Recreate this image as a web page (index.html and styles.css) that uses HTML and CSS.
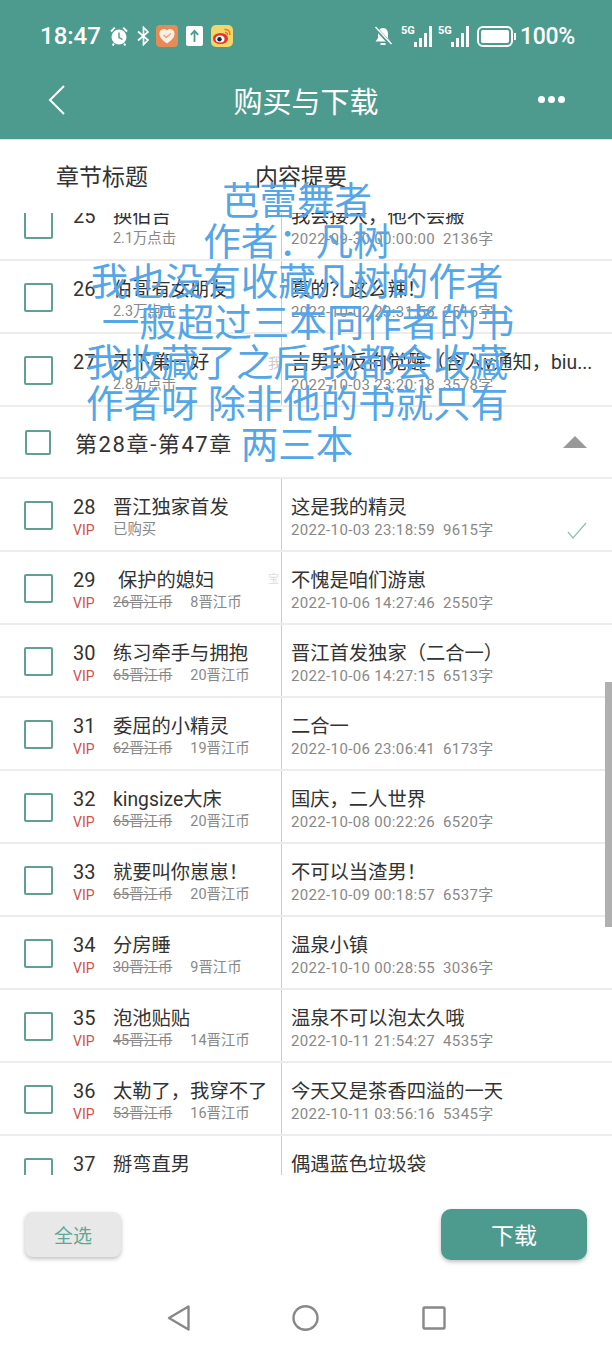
FILE: index.html
```html
<!DOCTYPE html>
<html lang="zh-CN">
<head>
  <meta charset="UTF-8" />
  <meta name="viewport" content="width=device-width, initial-scale=1.0"/>
  <title>购买与下载</title>
  <link rel="stylesheet" href="styles.css">
</head>
<body>
  <div class="phone">
    <header class="header">
      <div class="status">
        <div class="status-left">
          <span class="time">18:47</span>
          <svg class="ic-alarm" viewBox="0 0 18 20">
            <circle cx="9" cy="11" r="7.5" fill="#fff"/>
            <path d="M9 6.5V11.5L12.5 13.5" fill="none" stroke="#4d9a8e" stroke-width="1.4"/>
            <path d="M1 5.5L4.8 1.6M17 5.5L13.2 1.6M4 17.5L2.6 19.5M14 17.5L15.4 19.5" stroke="#fff" stroke-width="2" fill="none"/>
          </svg>
          <svg class="ic-bt" viewBox="0 0 13 20">
            <path d="M1 5.5L11 14L6.5 18.5V1.5L11 6L1 14.5" fill="none" stroke="#fff" stroke-width="1.7"/>
          </svg>
          <svg class="ic-app" viewBox="0 0 22 22">
            <rect width="22" height="22" rx="4" fill="#e58b55"/>
            <path d="M11 18.5C5 14.500 3.500 11.500 3.500 8.500C3.500 5.500 6 4 8 4C9.300 4 10.300 4.600 11 5.600C11.700 4.600 12.700 4 14 4C16 4 18.500 5.500 18.500 8.500C18.500 11.500 17 14.500 11 18.500Z" fill="#fbeee3"/>
            <path d="M7.500 10L10.200 12.500L14.800 8.500" fill="none" stroke="#e9a67c" stroke-width="1.500"/>
          </svg>
          <svg class="ic-up" viewBox="0 0 17 20">
            <rect width="17" height="20" rx="2" fill="#fff"/>
            <path d="M8.500 16V5M4.800 8.800L8.500 4.800L12.200 8.800" fill="none" stroke="#4d9a8e" stroke-width="1.800"/>
          </svg>
          <svg class="ic-app" viewBox="0 0 22 22">
            <rect width="22" height="22" rx="5" fill="#f4d568"/>
            <ellipse cx="9.500" cy="13.500" rx="7.500" ry="5.500" fill="#e2352d"/>
            <ellipse cx="9" cy="14" rx="4.500" ry="3.500" fill="#fff"/>
            <circle cx="8.500" cy="14.200" r="2.200" fill="#222"/>
            <path d="M13.500 4.500C17 4 19.500 6.500 18.800 10M14 7.500C15.500 7.300 16.700 8.300 16.400 9.800" fill="none" stroke="#e2752d" stroke-width="1.500"/>
          </svg>
        </div>
        <div class="status-right">
          <svg class="ic-bell" viewBox="0 0 20 20">
            <path d="M10 2C6.500 2 5 5 5 8V12L2.500 15.500H17.500L15 12V8C15 5 13.500 2 10 2Z" fill="#fff"/>
            <rect x="7.500" y="17" width="5" height="2" fill="#fff"/>
            <path d="M2 1.500L18 18.500" stroke="#4d9a8e" stroke-width="3.500"/>
            <path d="M2.500 1L18.500 18" stroke="#fff" stroke-width="1.500"/>
          </svg>
          <span class="signal">
            <span class="net">5G</span>
            <span class="bars"><i class="b1"></i><i class="b2"></i><i class="b3"></i><i class="b4"></i></span>
          </span>
          <span class="signal">
            <span class="net">5G</span>
            <span class="bars"><i class="b1"></i><i class="b2"></i><i class="b3"></i><i class="b4"></i></span>
          </span>
          <span class="battery"><span class="battery-fill"></span></span>
          <span class="battery-nub"></span>
          <span class="percent">100%</span>
        </div>
      </div>
      <div class="toolbar">
        <svg class="back" viewBox="0 0 18 32">
          <path d="M16 2L2 16L16 30" fill="none" stroke="#fff" stroke-width="2"/>
        </svg>
        <h1>购买与下载</h1>
        <div class="more"><i></i><i></i><i></i></div>
      </div>
    </header>

    <div class="col-head">
      <span class="col-a">章节标题</span>
      <span class="col-b">内容提要</span>
    </div>

    <div class="list">
      <div class="list-inner">
        <div class="row">
          <div class="left">
            <span class="check"></span>
            <div class="num"><div class="n">25</div></div>
            <div class="info"><div class="title">换伯吉</div><div class="sub">2.1万点击</div></div>
          </div>
          <div class="right"><div class="title">我会接大，他不会搬</div><div class="sub">2022-09-30 00:00:00&nbsp; 2136字</div></div>
        </div>
        <div class="row">
          <div class="left">
            <span class="check"></span>
            <div class="num"><div class="n">26</div></div>
            <div class="info"><div class="title">伯哥有女朋友</div><div class="sub">2.3万点击</div></div>
          </div>
          <div class="right"><div class="title">真的？这么辣！</div><div class="sub">2022-10-02 23:31:56&nbsp; 2516字</div></div>
        </div>
        <div class="row">
          <div class="left">
            <span class="check"></span>
            <div class="num"><div class="n">27</div></div>
            <div class="info"><div class="title">天下第一好</div><div class="sub">2.8万点击</div></div>
            <span class="ghost">我</span>
          </div>
          <div class="right"><div class="title">吉男的反向觉醒（含入v通知，biu...</div><div class="sub">2022-10-03 23:20:18&nbsp; 3578字</div></div>
        </div>
        <div class="group">
          <span class="check small"></span>
          <span class="group-name">第28章-第47章</span>
          <span class="arrow"></span>
        </div>
        <div class="row">
          <div class="left">
            <span class="check"></span>
            <div class="num"><div class="n">28</div><div class="vip">VIP</div></div>
            <div class="info"><div class="title">晋江独家首发</div><div class="sub">已购买</div></div>
          </div>
          <div class="right"><div class="title">这是我的精灵</div><div class="sub">2022-10-03 23:18:59&nbsp; 9615字</div>
            <svg class="done" viewBox="0 0 20 17"><path d="M1 10L6 16L19 1" fill="none" stroke="#8fbfb6" stroke-width="1.200"/></svg>
          </div>
        </div>
        <div class="row">
          <div class="left">
            <span class="check"></span>
            <div class="num"><div class="n">29</div><div class="vip">VIP</div></div>
            <div class="info"><div class="title indent">保护的媳妇</div><div class="sub"><s>26晋江币</s><span class="price">8晋江币</span></div></div>
            <span class="ghost pale">宝</span>
          </div>
          <div class="right"><div class="title">不愧是咱们游崽</div><div class="sub">2022-10-06 14:27:46&nbsp; 2550字</div></div>
        </div>
        <div class="row">
          <div class="left">
            <span class="check"></span>
            <div class="num"><div class="n">30</div><div class="vip">VIP</div></div>
            <div class="info"><div class="title">练习牵手与拥抱</div><div class="sub"><s>65晋江币</s><span class="price">20晋江币</span></div></div>
          </div>
          <div class="right"><div class="title">晋江首发独家（二合一）</div><div class="sub">2022-10-06 14:27:15&nbsp; 6513字</div></div>
        </div>
        <div class="row">
          <div class="left">
            <span class="check"></span>
            <div class="num"><div class="n">31</div><div class="vip">VIP</div></div>
            <div class="info"><div class="title">委屈的小精灵</div><div class="sub"><s>62晋江币</s><span class="price">19晋江币</span></div></div>
          </div>
          <div class="right"><div class="title">二合一</div><div class="sub">2022-10-06 23:06:41&nbsp; 6173字</div></div>
        </div>
        <div class="row">
          <div class="left">
            <span class="check"></span>
            <div class="num"><div class="n">32</div><div class="vip">VIP</div></div>
            <div class="info"><div class="title">kingsize大床</div><div class="sub"><s>65晋江币</s><span class="price">20晋江币</span></div></div>
          </div>
          <div class="right"><div class="title">国庆，二人世界</div><div class="sub">2022-10-08 00:22:26&nbsp; 6520字</div></div>
        </div>
        <div class="row">
          <div class="left">
            <span class="check"></span>
            <div class="num"><div class="n">33</div><div class="vip">VIP</div></div>
            <div class="info"><div class="title">就要叫你崽崽！</div><div class="sub"><s>65晋江币</s><span class="price">20晋江币</span></div></div>
          </div>
          <div class="right"><div class="title">不可以当渣男！</div><div class="sub">2022-10-09 00:18:57&nbsp; 6537字</div></div>
        </div>
        <div class="row">
          <div class="left">
            <span class="check"></span>
            <div class="num"><div class="n">34</div><div class="vip">VIP</div></div>
            <div class="info"><div class="title">分房睡</div><div class="sub"><s>30晋江币</s><span class="price">9晋江币</span></div></div>
          </div>
          <div class="right"><div class="title">温泉小镇</div><div class="sub">2022-10-10 00:28:55&nbsp; 3036字</div></div>
        </div>
        <div class="row">
          <div class="left">
            <span class="check"></span>
            <div class="num"><div class="n">35</div><div class="vip">VIP</div></div>
            <div class="info"><div class="title">泡池贴贴</div><div class="sub"><s>45晋江币</s><span class="price">14晋江币</span></div></div>
          </div>
          <div class="right"><div class="title">温泉不可以泡太久哦</div><div class="sub">2022-10-11 21:54:27&nbsp; 4535字</div></div>
        </div>
        <div class="row">
          <div class="left">
            <span class="check"></span>
            <div class="num"><div class="n">36</div><div class="vip">VIP</div></div>
            <div class="info"><div class="title">太勒了，我穿不了</div><div class="sub"><s>53晋江币</s><span class="price">16晋江币</span></div></div>
          </div>
          <div class="right"><div class="title">今天又是茶香四溢的一天</div><div class="sub">2022-10-11 03:56:16&nbsp; 5345字</div></div>
        </div>
        <div class="row">
          <div class="left">
            <span class="check"></span>
            <div class="num"><div class="n">37</div></div>
            <div class="info"><div class="title">掰弯直男</div></div>
          </div>
          <div class="right"><div class="title">偶遇蓝色垃圾袋</div></div>
        </div>
      </div>
    </div>

    <div class="actions">
      <button class="btn-all">全选</button>
      <button class="btn-down">下载</button>
    </div>

    <nav class="nav">
      <svg class="nav-back" viewBox="0 0 24 26"><path d="M21.500 1.500V24.500L2 13Z" fill="none" stroke="#888" stroke-width="2.400" stroke-linejoin="round"/></svg>
      <svg class="nav-home" viewBox="0 0 27 26"><ellipse cx="13.500" cy="13" rx="12" ry="11.700" fill="none" stroke="#888" stroke-width="2.400"/></svg>
      <svg class="nav-recent" viewBox="0 0 24 24"><rect x="1.500" y="1.500" width="21" height="21" rx="1" fill="none" stroke="#888" stroke-width="2.400"/></svg>
    </nav>

    <div class="scrollbar"></div>

    <div class="comment">
      芭蕾舞者<br>
      作者：凡树<br>
      我也没有收藏凡树的作者<br>
      <span class="nudge">一般超过三本同作者的书</span><br>
      我收藏了之后 我都会收藏<br>
      作者呀 除非他的书就只有<br>
      两三本
    </div>
  </div>
</body>
</html>
```

FILE: styles.css
```css
* {
  box-sizing: border-box;
}

body {
  margin: 0;
  background: #fff;
  font-family: Roboto, "Noto Sans CJK SC", sans-serif;
  color: #333;
}

.phone {
  position: relative;
  width: 612px;
  height: 1350px;
  overflow: hidden;
  display: flex;
  flex-direction: column;
  background: #fff;
}

/* header */
.header {
  height: 140px;
  background: #4d9a8e;
  border-bottom: 1px solid #d7e8e4;
  color: #fff;
}

.status {
  height: 70px;
  padding: 2px 37px 0 40px;
  display: flex;
  justify-content: space-between;
  align-items: center;
}

.status-left,
.status-right {
  display: flex;
  align-items: center;
}

.time {
  font-size: 24px;
  font-weight: 500;
  margin-right: 9px;
}

.ic-alarm {
  width: 18px;
  height: 20px;
  margin-right: 9px;
}

.ic-bt {
  width: 13px;
  height: 20px;
  margin-right: 6px;
}

.ic-app {
  width: 22px;
  height: 22px;
}

.ic-up {
  width: 17px;
  height: 20px;
  margin: 0 8px;
}

.ic-bell {
  width: 20px;
  height: 20px;
  margin-right: 8px;
}

.signal {
  display: flex;
  align-items: flex-end;
  height: 22px;
  margin-right: 6px;
  position: relative;
}

.net {
  font-size: 11px;
  font-weight: 700;
  line-height: 11px;
  width: 17px;
  align-self: flex-start;
}

.bars {
  display: flex;
  align-items: flex-end;
  gap: 2px;
  margin-left: -4px;
}

.bars i {
  display: block;
  width: 3px;
  background: #fff;
}

.b1 { height: 5px; }
.b2 { height: 9px; }
.b3 { height: 14px; }
.b4 { height: 21px; }

.battery {
  width: 36px;
  height: 21px;
  margin-left: 2px;
  border: 2px solid #fff;
  border-radius: 6px;
  padding: 2px;
}

.battery-fill {
  display: block;
  height: 100%;
  background: #fff;
  border-radius: 2px;
}

.battery-nub {
  width: 2px;
  height: 7px;
  margin: 0 4px 0 1px;
  background: #fff;
}

.percent {
  font-size: 23px;
  font-weight: 500;
  letter-spacing: -0.3px;
}

.toolbar {
  height: 69px;
  display: flex;
  align-items: center;
  justify-content: space-between;
  padding: 0 47px 10px 48px;
  position: relative;
}

.back {
  width: 18px;
  height: 32px;
}

.toolbar h1 {
  flex: 1;
  margin: 0;
  text-align: center;
  font-size: 29px;
  font-weight: 400;
  padding-left: 8px;
}

.more {
  display: flex;
  gap: 3px;
}

.more i {
  width: 7px;
  height: 7px;
  border-radius: 50%;
  background: #fff;
}

/* column titles */
.col-head {
  height: 73px;
  display: flex;
  padding: 18px 0 0 56px;
  font-size: 23px;
  color: #333;
}

.col-a {
  width: 199px;
}

/* list */
.list {
  height: 962px;
  overflow: hidden;
}

.list-inner {
  margin-top: -25px;
}

.row {
  height: 73px;
  display: flex;
  border-bottom: 2px solid #ececec;
}

.left {
  width: 282px;
  display: flex;
  align-items: flex-start;
  padding-left: 24px;
  border-right: 1px solid #ccc;
  position: relative;
}

.check {
  flex: none;
  width: 29px;
  height: 29px;
  margin-top: 22px;
  border: 2px solid #5f9f94;
  border-radius: 2px;
}

.check.small {
  width: 26px;
  height: 25px;
  margin: 0 0 0 1px;
}

.num {
  width: 40px;
  margin-left: 20px;
  padding-top: 16px;
}

.n {
  font-size: 20px;
  line-height: 25px;
  color: #333;
}

.vip {
  font-size: 14px;
  line-height: 20px;
  color: #d0504a;
}

.info {
  padding-top: 16px;
  min-width: 0;
}

.title {
  font-size: 19.3px;
  line-height: 25px;
  color: #333;
  white-space: nowrap;
}

.title.indent {
  padding-left: 5px;
}

.sub {
  font-size: 14.4px;
  line-height: 20px;
  color: #888;
  white-space: nowrap;
}

.right .sub {
  font-size: 15px;
  letter-spacing: 0.35px;
}

.price {
  margin-left: 18px;
}

.ghost {
  position: absolute;
  left: 268px;
  top: 18px;
  font-size: 14px;
  color: #ccc;
}

.ghost.pale {
  color: #ddd;
  font-size: 11px;
}

.right {
  flex: 1;
  min-width: 0;
  padding: 16px 0 0 9px;
  position: relative;
}

.done {
  position: absolute;
  left: 285px;
  top: 43px;
  width: 20px;
  height: 17px;
}

.group {
  height: 72px;
  display: flex;
  align-items: center;
  padding: 0 25px 0 24px;
  border-bottom: 2px solid #ececec;
}

.group-name {
  flex: 1;
  margin-left: 24px;
  font-size: 22px;
  letter-spacing: 1.6px;
  color: #333;
}

.arrow {
  width: 0;
  height: 0;
  border-left: 12px solid transparent;
  border-right: 12px solid transparent;
  border-bottom: 12px solid #999;
}

/* bottom */
.actions {
  height: 118px;
  display: flex;
  justify-content: space-between;
  align-items: center;
  padding: 0 25px;
}

.btn-all {
  width: 96px;
  height: 45px;
  border: 0;
  border-radius: 8px;
  background: #e8e8e8;
  box-shadow: 0 2px 4px rgba(0, 0, 0, 0.25);
  color: #5fa898;
  font-family: inherit;
  font-size: 19px;
}

.btn-down {
  width: 146px;
  height: 51px;
  border: 0;
  border-radius: 10px;
  background: #4d9a8e;
  box-shadow: 0 2px 4px rgba(0, 0, 0, 0.25);
  color: #fff;
  font-family: inherit;
  font-size: 23px;
}

.nav {
  height: 57px;
  display: flex;
  align-items: flex-start;
  padding: 12px 0 0 167px;
}

.nav-back {
  width: 24px;
  height: 26px;
}

.nav-home {
  width: 27px;
  height: 26px;
  margin-left: 101px;
}

.nav-recent {
  width: 24px;
  height: 24px;
  margin: 1px 0 0 103px;
}

.scrollbar {
  position: absolute;
  left: 605px;
  top: 682px;
  width: 7px;
  height: 245px;
  background: #b0b0b0;
}

/* blue comment text over the page */
.comment {
  position: absolute;
  left: 0;
  top: 181px;
  width: 594px;
  text-align: center;
  font-size: 37.5px;
  line-height: 40.6px;
  color: #55a6e6;
  white-space: nowrap;
}

.nudge {
  position: relative;
  left: 11px;
}
```
